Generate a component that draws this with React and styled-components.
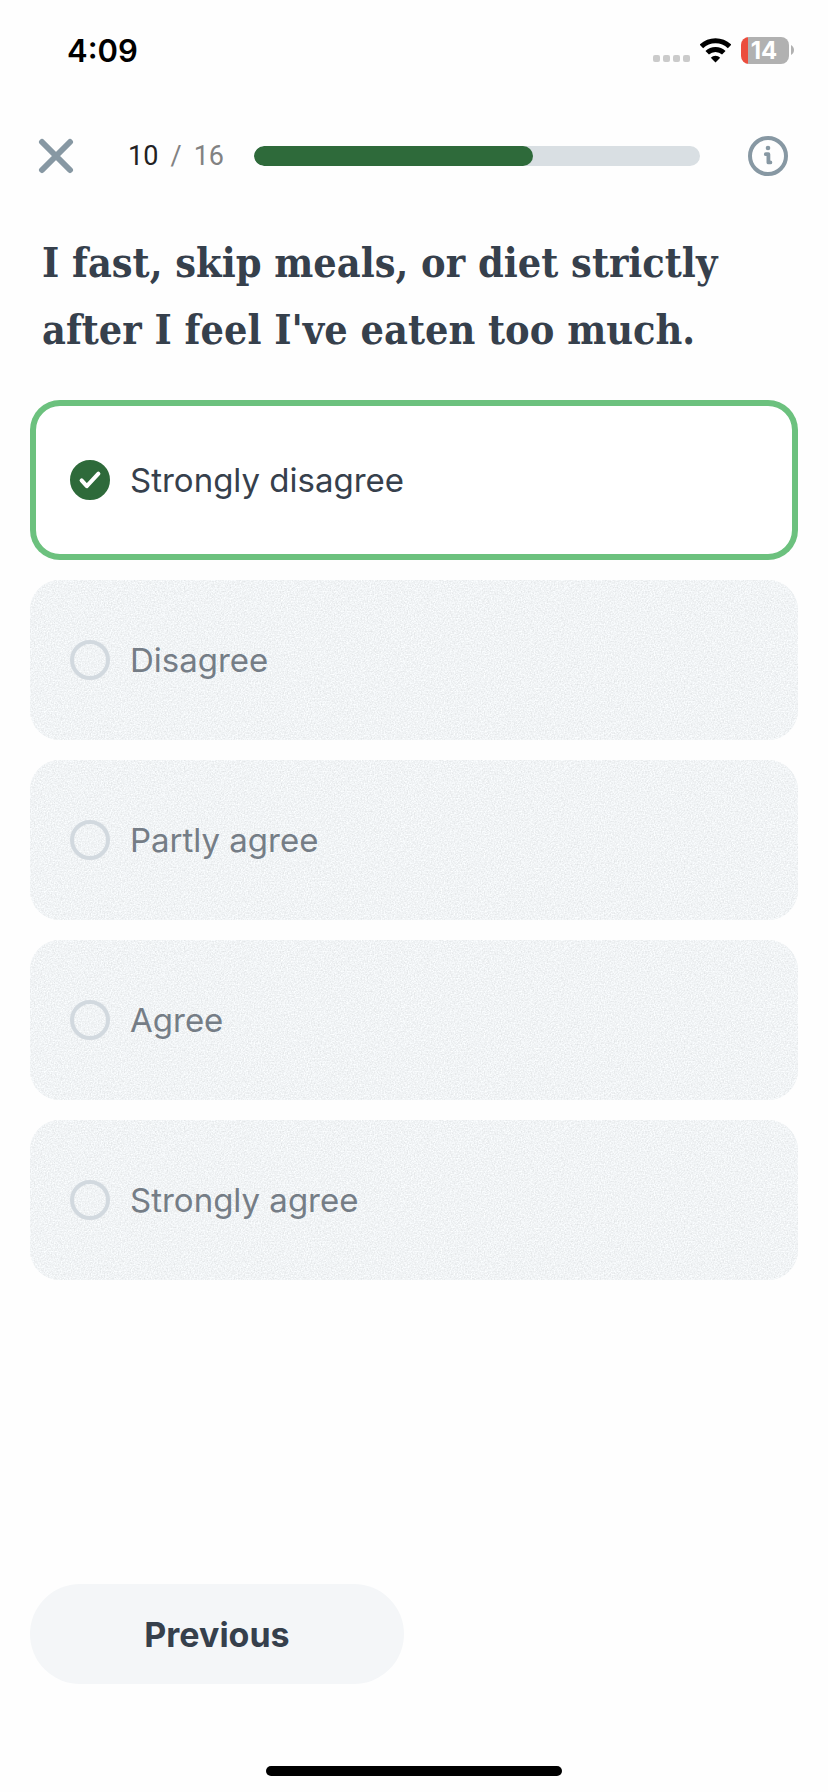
import React, { useState } from "react";
import styled, { createGlobalStyle, ThemeProvider } from "styled-components";

const theme = {
  ink: "#36404c",
  muted: "#757d86",
  steel: "#8798a3",
  green: "#2e6a3a",
  lightGreen: "#6cc17e",
  track: "#d9dfe3",
  ring: "#d2d9df",
  card: "#f0f3f5",
  button: "#f4f6f8",
};

const GlobalStyle = createGlobalStyle`
  * {
    box-sizing: border-box;
  }
  body {
    margin: 0;
    background: #fefefe;
    font-family: Inter, "Liberation Sans", sans-serif;
  }
`;

const Page = styled.div`
  display: flex;
  flex-direction: column;
  min-height: 100vh;
`;

const StatusBar = styled.div`
  display: flex;
  align-items: center;
  justify-content: space-between;
  height: 100px;
  padding: 0 34px 0 67px;
`;

const Time = styled.span`
  color: #000;
  font-size: 31px;
  font-weight: 600;
`;

const StatusIcons = styled.div`
  display: flex;
  align-items: center;
  gap: 10px;
`;

const Battery = styled.div`
  display: flex;
  align-items: center;
  gap: 2px;
`;

Battery.Body = styled.div`
  display: flex;
  align-items: center;
  justify-content: center;
  width: 48px;
  height: 27px;
  padding-right: 2px;
  border-radius: 8px;
  background: linear-gradient(to right, #eb4d3d 7px, #b1b1b1 7px);
  color: #fff;
  font-size: 24px;
  font-weight: 700;
`;

const Header = styled.header`
  display: flex;
  align-items: center;
  height: 112px;
  padding: 0 40px 0 38px;
`;

const IconButton = styled.button`
  display: flex;
  padding: 0;
  border: 0;
  background: none;
  color: ${({ theme }) => theme.steel};
  cursor: pointer;
`;

const Counter = styled.div`
  display: flex;
  justify-content: space-between;
  width: 96px;
  margin: 0 30px 0 54px;
  color: #828282;
  font-family: Roboto, sans-serif;
  font-size: 27px;
  b {
    color: #222;
    font-weight: 400;
  }
`;

const Progress = styled.div`
  flex: 1;
  height: 20px;
  margin-right: 48px;
  overflow: hidden;
  border-radius: 10px;
  background: ${({ theme }) => theme.track};
`;

Progress.Fill = styled.div`
  height: 100%;
  border-radius: 10px;
  background: ${({ theme }) => theme.green};
`;

const Question = styled.fieldset`
  min-width: 0;
  margin: 0;
  padding: 18px 30px 0;
  border: 0;
`;

Question.Title = styled.legend`
  float: left;
  width: 100%;
  margin-bottom: 36px;
  padding: 0 12px;
  color: ${({ theme }) => theme.ink};
  font-family: "DejaVu Serif Condensed", "DejaVu Serif", serif;
  font-size: 41px;
  font-weight: 700;
  line-height: 67px;
`;

const Options = styled.div`
  display: flex;
  flex-direction: column;
  clear: both;
  gap: 20px;
`;

const Option = styled.label`
  position: relative;
  display: flex;
  align-items: center;
  gap: 20px;
  height: 160px;
  padding: 0 40px;
  overflow: hidden;
  border-radius: 30px;
  background: ${({ theme, $selected }) => ($selected ? "#fff" : theme.card)};
  box-shadow: ${({ theme, $selected }) =>
    $selected ? `inset 0 0 0 6px ${theme.lightGreen}` : "none"};
  color: ${({ theme, $selected }) => ($selected ? theme.ink : theme.muted)};
  font-size: 33px;
  cursor: pointer;
`;

Option.Grain = styled.svg`
  position: absolute;
  inset: 0;
  width: 100%;
  height: 100%;
  pointer-events: none;
`;

Option.Text = styled.span`
  position: relative;
`;

const Mark = styled.span`
  position: relative;
  display: flex;
  svg {
    position: absolute;
    inset: 0;
    pointer-events: none;
  }
`;

const Radio = styled.input`
  width: 40px;
  height: 40px;
  margin: 0;
  appearance: none;
  border: 4px solid ${({ theme }) => theme.ring};
  border-radius: 50%;
  &:checked {
    border-color: ${({ theme }) => theme.green};
    background: ${({ theme }) => theme.green};
  }
`;

const Footer = styled.footer`
  display: grid;
  grid-template-columns: 1fr 1fr;
  gap: 20px;
  margin-top: auto;
  padding: 40px 30px 82px;
`;

const Button = styled.button`
  height: 100px;
  border: 0;
  border-radius: 50px;
  background: ${({ theme }) => theme.button};
  color: ${({ theme }) => theme.ink};
  font-family: inherit;
  font-size: 34px;
  font-weight: 700;
  cursor: pointer;
`;

const HomeIndicator = styled.div`
  align-self: center;
  width: 296px;
  height: 10px;
  margin-bottom: 16px;
  border-radius: 5px;
  background: #000;
`;

const answers = [
  "Strongly disagree",
  "Disagree",
  "Partly agree",
  "Agree",
  "Strongly agree",
];

const step = 10;
const total = 16;

const Signal = () => (
  <svg width="37" height="27" viewBox="0 0 37 27" fill="#cbcbcb">
    <rect x="0" y="18" width="7" height="7" rx="2" />
    <rect x="10" y="18" width="7" height="7" rx="2" />
    <rect x="20" y="18" width="7" height="7" rx="2" />
    <rect x="30" y="18" width="7" height="7" rx="2" />
  </svg>
);

const Wifi = () => (
  <svg width="31" height="25" viewBox="0 0 31 25">
    <g fill="none" stroke="#000" strokeWidth="5">
      <path d="M1.4 8.4a20.2 20.2 0 0 1 28.2 0" />
      <path d="M7.2 14.8a11.8 11.8 0 0 1 16.6 0" />
    </g>
    <path d="M15.5 24.4l-4.7-4.7a6.8 6.8 0 0 1 9.4 0z" />
  </svg>
);

const Close = () => (
  <svg width="36" height="36" viewBox="0 0 36 36">
    <path
      d="M4 4l28 28M32 4L4 32"
      stroke="currentColor"
      strokeWidth="6"
      strokeLinecap="round"
    />
  </svg>
);

const Info = () => (
  <svg width="40" height="40" viewBox="0 0 40 40" fill="none">
    <circle cx="20" cy="20" r="18" stroke="currentColor" strokeWidth="4" />
    <circle cx="20" cy="12" r="2.3" fill="currentColor" />
    <path
      d="M17.8 18.2h2.6v8.2h2"
      stroke="currentColor"
      strokeWidth="3.8"
      strokeLinecap="round"
      strokeLinejoin="round"
    />
  </svg>
);

const Check = () => (
  <svg width="40" height="40" viewBox="0 0 40 40" fill="none">
    <path
      d="M11.6 20.4l5.2 5.8L28.4 13.6"
      stroke="#fff"
      strokeWidth="4"
      strokeLinecap="round"
      strokeLinejoin="round"
    />
  </svg>
);

const Grain = () => (
  <Option.Grain aria-hidden="true">
    <filter
      id="grain"
      x="0"
      y="0"
      width="100%"
      height="100%"
      colorInterpolationFilters="sRGB"
    >
      <feTurbulence type="fractalNoise" baseFrequency="0.7" numOctaves="3" />
      <feColorMatrix values="0.16 0 0 0 0.864  0.16 0 0 0 0.875  0.16 0 0 0 0.882  0 0 0 0 1" />
    </filter>
    <rect width="100%" height="100%" filter="url(#grain)" />
  </Option.Grain>
);

export default () => {
  const [answer, setAnswer] = useState(answers[0]);

  return (
    <ThemeProvider theme={theme}>
      <GlobalStyle />
      <Page>
        <StatusBar>
          <Time>4:09</Time>
          <StatusIcons>
            <Signal />
            <Wifi />
            <Battery>
              <Battery.Body>14</Battery.Body>
              <svg width="3" height="10" viewBox="0 0 3 10" fill="#b1b1b1">
                <path d="M0 0c4 2 4 8 0 10z" />
              </svg>
            </Battery>
          </StatusIcons>
        </StatusBar>
        <Header>
          <IconButton type="button" aria-label="Close">
            <Close />
          </IconButton>
          <Counter>
            <b>{step}</b>
            <span>/</span>
            <span>{total}</span>
          </Counter>
          <Progress
            role="progressbar"
            aria-label="Progress"
            aria-valuenow={step}
            aria-valuemax={total}
          >
            <Progress.Fill style={{ width: `${(step / total) * 100}%` }} />
          </Progress>
          <IconButton type="button" aria-label="Information">
            <Info />
          </IconButton>
        </Header>
        <Question>
          <Question.Title>
            I fast, skip meals, or diet strictly after I feel I've eaten too
            much.
          </Question.Title>
          <Options>
            {answers.map((text) => (
              <Option key={text} $selected={text === answer}>
                {text !== answer && <Grain />}
                <Mark>
                  <Radio
                    type="radio"
                    name="answer"
                    checked={text === answer}
                    onChange={() => setAnswer(text)}
                  />
                  {text === answer && <Check />}
                </Mark>
                <Option.Text>{text}</Option.Text>
              </Option>
            ))}
          </Options>
        </Question>
        <Footer>
          <Button type="button">Previous</Button>
        </Footer>
        <HomeIndicator />
      </Page>
    </ThemeProvider>
  );
};
